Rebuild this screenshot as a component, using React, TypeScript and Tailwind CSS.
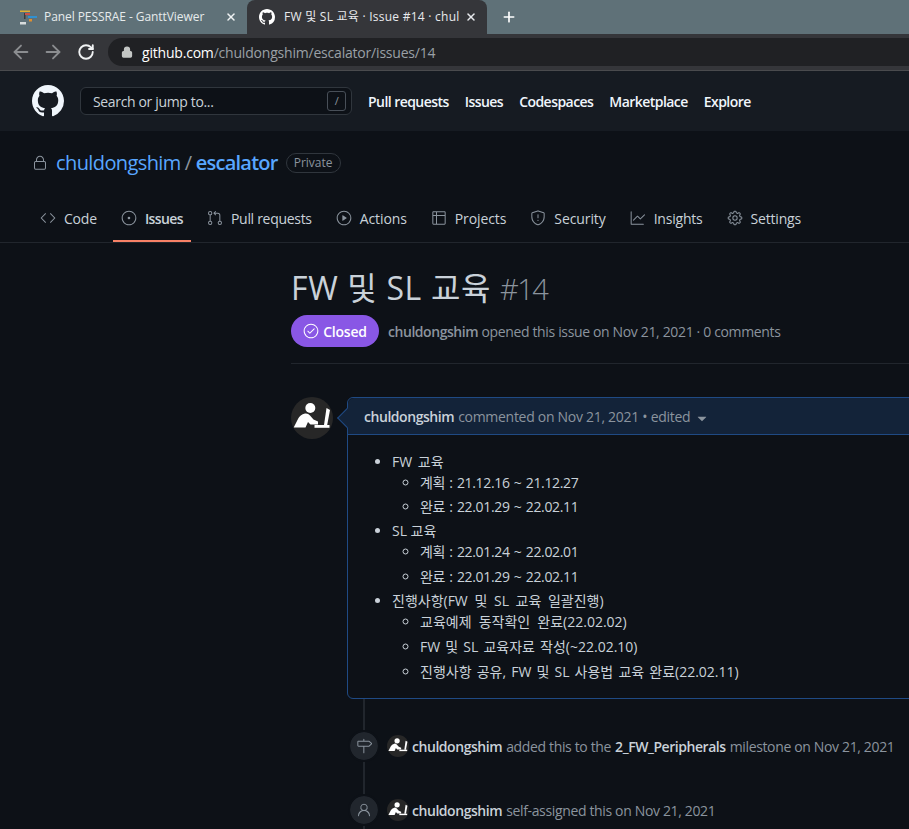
import React from "react";
import { GoCode, GoIssueOpened, GoGitPullRequest, GoPlay, GoTable, GoShield, GoGraph, GoGear, GoLock, GoCheckCircle, GoMilestone, GoPerson, GoTriangleDown } from "react-icons/go";
import { ArrowLeft, ArrowRight, RotateCw, Lock, X, Plus } from "lucide-react";

function GitHubMark({ size, className }: { size: number; className: string }) {
  return (
    <svg viewBox="0 0 16 16" width={size} height={size} fill="currentColor" className={className}>
      <path d="M8 0C3.58 0 0 3.58 0 8c0 3.54 2.29 6.53 5.47 7.59.4.07.55-.17.55-.38 0-.19-.01-.82-.01-1.49-2.01.37-2.53-.49-2.69-.94-.09-.23-.48-.94-.82-1.13-.28-.15-.68-.52-.01-.53.63-.01 1.08.58 1.23.82.72 1.21 1.87.87 2.33.66.07-.52.28-.87.51-1.07-1.78-.2-3.64-.89-3.64-3.95 0-.87.31-1.59.82-2.15-.08-.2-.36-1.02.08-2.12 0 0 .67-.21 2.2.82.64-.18 1.32-.27 2-.27.68 0 1.36.09 2 .27 1.53-1.04 2.2-.82 2.2-.82.44 1.1.16 1.92.08 2.12.51.56.82 1.27.82 2.15 0 3.07-1.87 3.75-3.65 3.95.29.25.54.73.54 1.48 0 1.07-.01 1.93-.01 2.2 0 .21.15.46.55.38A8.013 8.013 0 0016 8c0-4.42-3.58-8-8-8z" />
    </svg>
  );
}

function Avatar({ className }: { className: string }) {
  return (
    <svg viewBox="0 0 42 42" className={className}>
      <circle cx="21" cy="21" r="21" fill="#272727" />
      <circle cx="19.3" cy="11" r="5" fill="#fff" />
      <path d="M2.7 30.5 L7 22 Q9 17.5 14 16.5 Q17 16 19 18.5 L22.5 22.5 L27 24.5 L27 27.5 L19.5 27.5 L17 25 L14.5 30.5 Z" fill="#fff" />
      <path d="M35.5 11 L39 13 L36.2 28 L33 28 Z" fill="#fff" />
      <path d="M23.5 28 H38.5 L38.5 30.8 H23.5 Z" fill="#fff" />
    </svg>
  );
}

function Tab({ icon, label, active, track }: { icon: React.ReactNode; label: string; active?: boolean; track: string }) {
  return (
    <div className={`flex items-center gap-2 h-[48px] border-b-2 px-2 pt-[2px] ${active ? "border-[#f78166] text-[#c9d1d9] font-semibold" : "border-transparent text-[#c9d1d9]"}`}>
      <span className="text-[#8b949e] flex">{icon}</span>
      <span className={`text-[14px] whitespace-nowrap ${track}`}>{label}</span>
    </div>
  );
}

function Li({ children }: { children: React.ReactNode }) {
  return <li className="mt-[3px]">{children}</li>;
}

export default function App() {
  return (
    <div className="w-[909px] h-[829px] overflow-hidden bg-[#0d1117] text-[#c9d1d9] tracking-[-0.35px] [font-family:'Open_Sans','Noto_Sans_CJK_KR',sans-serif]">
      {/* Browser tabs */}
      <div className="h-[34px] bg-[#5f7178] flex items-end overflow-hidden tracking-normal">
        <div className="w-[247px] h-full flex items-center pl-[20px] pr-[10px] text-[#e6ebec] shrink-0">
          <svg viewBox="0 0 17 17" className="w-[17px] h-[17px] shrink-0">
            <rect x="0" y="1.5" width="10" height="1.5" fill="#e0b030" />
            <rect x="4" y="4" width="1.5" height="6" fill="#3b3b3b" />
            <rect x="5" y="4" width="5" height="2" fill="#c8504a" />
            <rect x="8" y="7" width="9" height="2" fill="#3090d0" />
            <rect x="9" y="10" width="3" height="2.5" fill="#e09030" />
            <rect x="0" y="13" width="6" height="2.5" fill="#d8dcdc" />
          </svg>
          <span className="ml-[7px] text-[12px] tracking-[-0.07px] whitespace-nowrap flex-1">Panel PESSRAE - GanttViewer</span>
          <X size={12} strokeWidth={3} className="text-[#f0f3f4]" />
        </div>
        <div className="w-[240px] h-full bg-[#35363a] rounded-t-[8px] flex items-center pl-[12px] pr-[10px] text-[#e8eaed] shrink-0">
          <GitHubMark size={16} className="shrink-0 text-white" />
          <span className="ml-[9px] text-[12px] tracking-[0.25px] whitespace-nowrap overflow-hidden flex-1">FW 및 SL 교육 · Issue #14 · chul</span>
          <X size={12} strokeWidth={3} className="ml-[4px] shrink-0" />
        </div>
        <Plus size={16} strokeWidth={2.5} className="ml-[14px] mb-[9px] text-white" />
      </div>
      {/* Toolbar */}
      <div className="h-[36px] bg-[#35363a] flex items-center pl-[10px] border-b border-[#4a4b4e] box-content tracking-normal">
        <ArrowLeft size={22} strokeWidth={2} className="text-[#8b8d90] shrink-0" />
        <ArrowRight size={22} strokeWidth={2} className="ml-[10px] text-[#8b8d90] shrink-0" />
        <RotateCw size={18} strokeWidth={2.5} className="ml-[13px] text-[#f1f3f4] shrink-0" />
        <div className="ml-[13px] flex-1 h-[28px] bg-[#202124] rounded-l-full flex items-center pl-[13px] text-[14px] tracking-[-0.2px]">
          <Lock size={12} fill="#c4c7c5" strokeWidth={2.5} className="text-[#c4c7c5]" />
          <span className="ml-[9px] text-white">github.com</span>
          <span className="text-[#9aa0a6]">/chuldongshim/escalator/issues/14</span>
        </div>
      </div>
      {/* GitHub header */}
      <div className="h-[60px] bg-[#161b22] flex items-center pl-[32px]">
        <GitHubMark size={32} className="text-[#f0f6fc]" />
        <div className="ml-[16px] w-[272px] h-[28px] bg-[#0d1117] border border-[#30363d] rounded-[6px] flex items-center justify-between pl-[12px] pr-[5px]">
          <span className="text-[14px] text-[#c9d1d9]">Search or jump to...</span>
          <span className="w-[19px] h-[20px] border border-[#484f58] rounded-[3px] text-[11px] text-[#8b949e] flex items-center justify-center">/</span>
        </div>
        <nav className="ml-[16px] flex gap-[16px] text-[14px] font-semibold tracking-[-0.55px] text-[#f0f6fc] whitespace-nowrap">
          <span>Pull requests</span>
          <span>Issues</span>
          <span>Codespaces</span>
          <span>Marketplace</span>
          <span>Explore</span>
        </nav>
      </div>
      {/* Repo head */}
      <div className="pl-[32px] flex items-center h-[63px]">
        <GoLock size={16} className="text-[#8b949e]" />
        <span className="ml-[8px] text-[20px] tracking-[-0.6px] text-[#58a6ff]">chuldongshim</span>
        <span className="mx-[4px] text-[20px] text-[#8b949e]">/</span>
        <span className="text-[20px] font-semibold tracking-[-0.75px] text-[#58a6ff]">escalator</span>
        <span className="ml-[8px] h-[20px] px-[7px] border border-[#30363d] rounded-full text-[12px] font-medium tracking-normal text-[#8b949e] flex items-center">Private</span>
      </div>
      <div className="h-[48px] pl-[32px] flex gap-[8px] border-b border-[#21262d] box-content">
        <Tab icon={<GoCode size={16} />} label="Code" track="tracking-[-0.2px]" />
        <Tab icon={<GoIssueOpened size={16} />} label="Issues" active track="tracking-[-0.6px]" />
        <Tab icon={<GoGitPullRequest size={16} />} label="Pull requests" track="tracking-[-0.3px]" />
        <Tab icon={<GoPlay size={16} />} label="Actions" track="tracking-[-0.1px]" />
        <Tab icon={<GoTable size={16} />} label="Projects" track="tracking-[-0.1px]" />
        <Tab icon={<GoShield size={16} />} label="Security" track="tracking-[-0.1px]" />
        <Tab icon={<GoGraph size={16} />} label="Insights" track="tracking-[-0.2px]" />
        <Tab icon={<GoGear size={16} />} label="Settings" track="tracking-[-0.2px]" />
      </div>
      {/* Issue */}
      <main className="pl-[291px] w-[1000px]">
        <h1 className="mt-[22px] text-[32px] leading-[45px] tracking-[0.65px] text-[#c9d1d9] whitespace-nowrap">
          FW 및 SL 교육 <span className="font-light text-[29px] tracking-[-1.5px] text-[#8b949e]">#14</span>
        </h1>
        <div className="mt-[4px] flex items-center pb-[16px] border-b border-[#21262d] box-content h-[32px]">
          <span className="h-[32px] w-[88px] rounded-full bg-[#8957e5] flex items-center justify-center gap-[4px] text-white text-[14px] font-semibold tracking-[-0.2px]">
            <GoCheckCircle size={16} /> Closed
          </span>
          <span className="ml-[9px] text-[14px] text-[#8b949e] whitespace-nowrap">
            <b className="font-semibold tracking-[-0.45px]">chuldongshim</b> opened this issue on Nov 21, 2021 · 0 comments
          </span>
        </div>
        {/* Comment */}
        <div className="mt-[33px] flex">
          <Avatar className="w-[42px] h-[42px] shrink-0 mr-[14px]" />
          <div className="relative flex-1 border border-[#1f4a84] rounded-[6px]">
            <span className="absolute -left-[8px] top-[13px] w-[14px] h-[14px] rotate-45 bg-[#132339] border-l border-b border-[#1f4a84]" />
            <div className="relative h-[36px] bg-[#132339] border-b border-[#1f4a84] box-content rounded-t-[6px] flex items-center pl-[16px] text-[14px] text-[#8b949e] whitespace-nowrap">
              <b className="font-semibold tracking-[-0.45px] text-[#c9d1d9]">chuldongshim</b>
              <span className="ml-[4px] tracking-[-0.29px]">commented on Nov 21, 2021 • edited</span>
              <GoTriangleDown size={16} className="ml-[4px] mt-[5px]" />
            </div>
            <ul className="list-disc pl-[44px] pt-[13px] pb-[16px] text-[14px] leading-[21px] tracking-normal text-[#c9d1d9]">
              <Li>
                <span className="[word-spacing:2px]">FW 교육</span>
                <ul className="list-[circle] pl-[28px] tracking-[-0.35px] [word-spacing:1px]">
                  <li>계획 : 21.12.16 ~ 21.12.27</li>
                  <li className="mt-[3px]">완료 : 22.01.29 ~ 22.02.11</li>
                </ul>
              </Li>
              <Li>
                SL 교육
                <ul className="list-[circle] pl-[28px] tracking-[-0.35px] [word-spacing:1px]">
                  <li>계획 : 22.01.24 ~ 22.02.01</li>
                  <li className="mt-[4px]">완료 : 22.01.29 ~ 22.02.11</li>
                </ul>
              </Li>
              <Li>
                <span className="[word-spacing:3px]">진행사항(FW 및 SL 교육 일괄진행)</span>
                <ul className="list-[circle] pl-[28px]">
                  <li className="[word-spacing:3.5px]">교육예제 동작확인 완료(22.02.02)</li>
                  <li className="mt-[4px] [word-spacing:1.5px]">FW 및 SL 교육자료 작성(~22.02.10)</li>
                  <li className="mt-[4px] [word-spacing:1.5px]">진행사항 공유, FW 및 SL 사용법 교육 완료(22.02.11)</li>
                </ul>
              </Li>
            </ul>
          </div>
        </div>
        {/* Timeline */}
        <div className="ml-[72px] border-l-2 border-[#21262d] pt-[31px] pb-[10px] text-[14px] text-[#8b949e] whitespace-nowrap">
          <div className="flex items-center h-[32px] -ml-[15px]">
            <span className="w-[28px] h-[28px] rounded-full bg-[#21262d] outline-2 outline-[#0d1117] flex items-center justify-center text-[#8b949e]">
              <GoMilestone size={16} />
            </span>
            <Avatar className="ml-[9px] w-[22px] h-[22px]" />
            <b className="ml-[3px] font-semibold tracking-[-0.45px] text-[#c9d1d9]">chuldongshim</b>
            <span className="ml-[4px]">added this to the</span>
            <b className="ml-[4px] font-semibold tracking-[-0.45px] text-[#c9d1d9]">2_FW_Peripherals</b>
            <span className="ml-[4px]">milestone on Nov 21, 2021</span>
          </div>
          <div className="mt-[32px] flex items-center h-[32px] -ml-[15px]">
            <span className="w-[28px] h-[28px] rounded-full bg-[#21262d] outline-2 outline-[#0d1117] flex items-center justify-center text-[#8b949e]">
              <GoPerson size={16} />
            </span>
            <Avatar className="ml-[9px] w-[22px] h-[22px]" />
            <b className="ml-[3px] font-semibold tracking-[-0.45px] text-[#c9d1d9]">chuldongshim</b>
            <span className="ml-[4px]">self-assigned this on Nov 21, 2021</span>
          </div>
        </div>
      </main>
    </div>
  );
}
